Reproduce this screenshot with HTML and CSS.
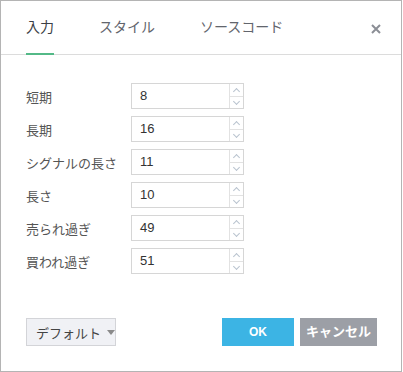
FILE: index.html
```html
<!DOCTYPE html>
<html>
    <head>
        <title>設定</title>
        <link rel="stylesheet" href="styles.css">
    </head>
    <body>
        <div class="dialog">
            <div class="tabs">
                <div class="tab active">入力</div>
                <div class="tab">スタイル</div>
                <div class="tab">ソースコード</div>
                <div class="close">
                    <svg width="10" height="10" viewBox="0 0 10 10"><path d="M1 1L9 9M9 1L1 9" stroke="#8b8e95" stroke-width="2"/></svg>
                </div>
            </div>
            <div class="form">
                <div class="row"><div class="label">短期</div><div class="field"><div class="value">8</div><div class="spin"><span class="up"></span><span class="down"></span></div></div></div>
                <div class="row"><div class="label">長期</div><div class="field"><div class="value">16</div><div class="spin"><span class="up"></span><span class="down"></span></div></div></div>
                <div class="row"><div class="label">シグナルの長さ</div><div class="field"><div class="value">11</div><div class="spin"><span class="up"></span><span class="down"></span></div></div></div>
                <div class="row"><div class="label">長さ</div><div class="field"><div class="value">10</div><div class="spin"><span class="up"></span><span class="down"></span></div></div></div>
                <div class="row"><div class="label">売られ過ぎ</div><div class="field"><div class="value">49</div><div class="spin"><span class="up"></span><span class="down"></span></div></div></div>
                <div class="row"><div class="label">買われ過ぎ</div><div class="field"><div class="value">51</div><div class="spin"><span class="up"></span><span class="down"></span></div></div></div>
            </div>
            <div class="footer">
                <div class="defaults">デフォルト<span class="caret"></span></div>
                <div class="spacer"></div>
                <div class="btn ok">OK</div>
                <div class="btn cancel">キャンセル</div>
            </div>
        </div>
    </body>
</html>
```
FILE: styles.css
```css
body {
    margin: 0;
    background: #fff;
    font-family: "Liberation Sans", "Noto Sans CJK JP", sans-serif;
    color: #333;
}
.dialog {
    width: 402px;
    height: 372px;
    box-sizing: border-box;
    border: 1px solid #b4b4b4;
    display: flex;
    flex-direction: column;
}
.tabs {
    display: flex;
    height: 53px;
    padding-left: 25px;
    border-bottom: 1px solid #dcdcdc;
}
.tab {
    font-size: 14px;
    line-height: 53px;
    height: 53px;
    margin-right: 45px;
    color: #62656c;
    box-sizing: border-box;
}
.tab.active {
    color: #3c3f46;
    border-bottom: 2px solid #53b987;
    margin-bottom: -1px;
    height: 54px;
    line-height: 53px;
}
.close {
    margin-left: auto;
    margin-right: 20px;
    padding-top: 19px;
}
.form {
    flex: 1;
    padding: 28px 0 0 25px;
    display: flex;
    flex-direction: column;
    gap: 7px;
}
.row {
    display: flex;
    align-items: center;
    height: 26px;
}
.label {
    width: 105px;
    font-size: 13px;
    color: #555;
}
.field {
    width: 113px;
    height: 26px;
    box-sizing: border-box;
    border: 1px solid #d6d6d6;
    display: flex;
}
.value {
    flex: 1;
    font-size: 13px;
    line-height: 24px;
    padding-left: 8px;
    color: #333;
}
.spin {
    width: 13px;
    border-left: 1px solid #e2e2e2;
    display: flex;
    flex-direction: column;
}
.spin span {
    flex: 1;
    position: relative;
}
.spin .up {
    border-bottom: 1px solid #e2e2e2;
}
.spin span::after {
    content: "";
    position: absolute;
    left: 4px;
    width: 4px;
    height: 4px;
    border-left: 1px solid #b9c3cf;
    border-top: 1px solid #b9c3cf;
}
.spin .up::after {
    top: 5px;
    transform: rotate(45deg);
}
.spin .down::after {
    top: 2px;
    transform: rotate(225deg);
}
.footer {
    display: flex;
    padding: 0 24px 25px 25px;
    gap: 6px;
}
.spacer {
    flex: 1;
}
.defaults {
    width: 90px;
    height: 28px;
    box-sizing: border-box;
    border: 1px solid #d3d4d8;
    background: #f0f1f5;
    font-size: 13px;
    padding-left: 9px;
    color: #444;
    display: flex;
    align-items: center;
    white-space: nowrap;
}
.caret {
    margin-left: 6px;
    width: 0;
    height: 0;
    border-left: 4px solid transparent;
    border-right: 4px solid transparent;
    border-top: 5px solid #8a8a8a;
}
.btn {
    height: 28px;
    line-height: 28px;
    text-align: center;
    color: #fff;
    font-weight: bold;
    font-size: 12px;
}
.ok {
    width: 72px;
    background: #3cb4e4;
}
.cancel {
    width: 77px;
    background: #9c9fa6;
    font-size: 13px;
}
```
